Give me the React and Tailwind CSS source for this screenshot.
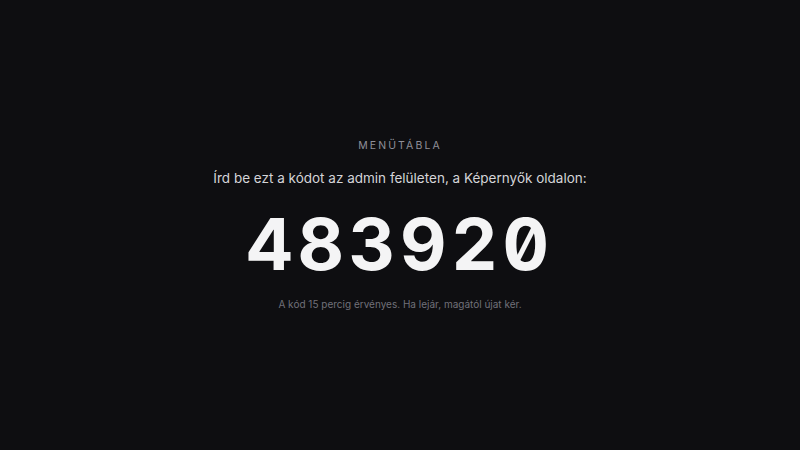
export default function App() {
  return (
    <div className="min-h-screen w-full bg-[#0e0e11] flex items-center justify-center px-4 font-['Inter','Noto_Sans',sans-serif]">
      <div className="flex flex-col items-center text-center">
        {/* brand */}
        <div className="text-[10.5px] leading-[16.5px] font-normal uppercase tracking-[0.2em] text-[#8e8e98] mb-[13px]">
          Menütábla
        </div>

        {/* instruction */}
        <p className="text-[13.5px] leading-[20px] text-[#d4d4d8]">
          Írd be ezt a kódot az admin felületen, a Képernyők oldalon:
        </p>

        {/* pairing code */}
        <div className="mt-[20px] text-[72px] leading-none font-bold tracking-[0.065em] text-[#f4f4f5] [font-feature-settings:'zero','tnum']">
          483920
        </div>

        <p className="mt-[17px] text-[10px] leading-[15px] text-[#71717a]">
          A kód 15 percig érvényes. Ha lejár, magától újat kér.
        </p>
      </div>
    </div>
  );
}
